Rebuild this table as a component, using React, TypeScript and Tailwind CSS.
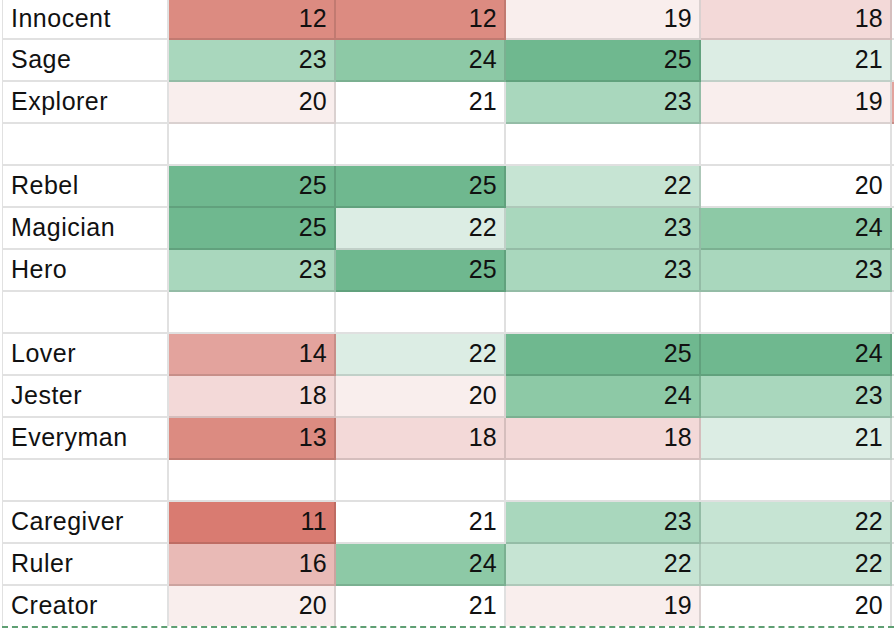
type Level = 'r5' | 'r4' | 'r3' | 'r2' | 'r1' | 'r0' | 'w' | 'g0' | 'g1' | 'g2' | 'g3' | 'g4';

const fill: Record<Level, string> = {
  r5: 'bg-[#d97b71]',
  r4: 'bg-[#dc8b81]',
  r3: 'bg-[#e3a39d]',
  r2: 'bg-[#e9bab6]',
  r1: 'bg-[#f3d9d8]',
  r0: 'bg-[#f9eeed]',
  w: 'bg-white',
  g0: 'bg-[#dcede4]',
  g1: 'bg-[#c6e4d3]',
  g2: 'bg-[#a9d7bd]',
  g3: 'bg-[#8dc9a6]',
  g4: 'bg-[#6fb88f]',
};

type Row = { name: string; cells: [number, Level][]; edge?: Level } | null;

const rows: Row[] = [
  { name: 'Innocent', cells: [[12, 'r4'], [12, 'r4'], [19, 'r0'], [18, 'r1']] },
  { name: 'Sage', cells: [[23, 'g2'], [24, 'g3'], [25, 'g4'], [21, 'g0']] },
  { name: 'Explorer', cells: [[20, 'r0'], [21, 'w'], [23, 'g2'], [19, 'r0']], edge: 'r3' },
  null,
  { name: 'Rebel', cells: [[25, 'g4'], [25, 'g4'], [22, 'g1'], [20, 'w']] },
  { name: 'Magician', cells: [[25, 'g4'], [22, 'g0'], [23, 'g2'], [24, 'g3']] },
  { name: 'Hero', cells: [[23, 'g2'], [25, 'g4'], [23, 'g2'], [23, 'g2']] },
  null,
  { name: 'Lover', cells: [[14, 'r3'], [22, 'g0'], [25, 'g4'], [24, 'g4']] },
  { name: 'Jester', cells: [[18, 'r1'], [20, 'r0'], [24, 'g3'], [23, 'g2']] },
  { name: 'Everyman', cells: [[13, 'r4'], [18, 'r1'], [18, 'r1'], [21, 'g0']] },
  null,
  { name: 'Caregiver', cells: [[11, 'r5'], [21, 'w'], [23, 'g2'], [22, 'g1']] },
  { name: 'Ruler', cells: [[16, 'r2'], [24, 'g3'], [22, 'g1'], [22, 'g1']] },
  { name: 'Creator', cells: [[20, 'r0'], [21, 'w'], [19, 'r0'], [20, 'w']] },
];

const widths = ['w-[167px]', 'w-[170px]', 'w-[195px]', 'w-[191px]'];

export default function App() {
  return (
    <div className="h-[630px] w-[894px] overflow-hidden bg-white pl-[2px] font-['Liberation_Sans',Arial,sans-serif] text-[25px] text-[#111]">
      {rows.map((row, i) => {
        const last = i === rows.length - 1;
        const height = i === 0 ? 'h-[40px]' : 'h-[42px]';
        const rowBorder = last ? 'border-b-2 border-dashed border-[#5f9f73]' : '';
        const cellBottom = last ? '' : 'border-b-2';
        return (
          <div key={i} className={`flex ${height} ${rowBorder}`}>
            <div
              className={`flex w-[167px] shrink-0 items-center border-l border-r-2 border-[#e1e1e1] pl-[8px] tracking-[0.02em] ${cellBottom}`}
            >
              {row?.name}
            </div>
            {[0, 1, 2, 3].map((c) => {
              const cell = row?.cells[c];
              return (
                <div
                  key={c}
                  className={`flex shrink-0 items-center justify-end border-r-2 border-black/[0.12] pr-[7px] tracking-[0.01em] ${cellBottom} ${widths[c]} ${cell ? fill[cell[1]] : 'bg-white'}`}
                >
                  {cell?.[0]}
                </div>
              );
            })}
            <div className={`flex-1 border-black/[0.12] ${cellBottom} ${row?.edge ? fill[row.edge] : 'bg-white'}`} />
          </div>
        );
      })}
    </div>
  );
}
